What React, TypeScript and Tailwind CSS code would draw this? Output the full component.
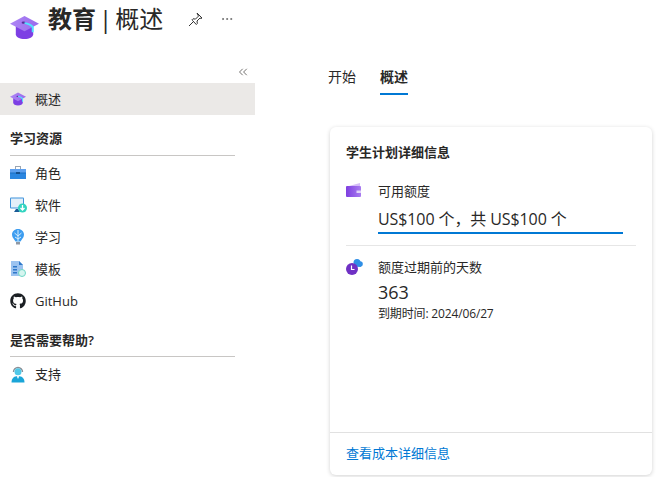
import { MoreHorizontal, ChevronsLeft } from "lucide-react"
import { FaGithub } from "react-icons/fa"
import type { ReactNode } from "react"

const CapIcon = ({ size, id }: { size: number; id: string }) => (
  <svg width={size} height={size} viewBox="0 0 30 30" className="shrink-0">
    <defs>
      <linearGradient id={id} x1="0" y1="0" x2="1" y2="0">
        <stop offset="0" stopColor="#ad85f5" />
        <stop offset="1" stopColor="#9a6cec" />
      </linearGradient>
    </defs>
    <path d="M6 13v9c0 3 4 5 9 5s9-2 9-5v-9z" fill="#7d3fe4" />
    <path d="M0 11 15 3l15 8-15 8z" fill={`url(#${id})`} />
    <ellipse cx="14" cy="10" rx="2" ry="1.200" fill="#552f99" />
    <path d="M15 9.500c4 .5 8 2 9.500 4.500v6h-2v-5c-1.500-2-4-3-7.500-4z" fill="#50e6ff" />
  </svg>
)

const RolesIcon = () => (
  <svg width="16" height="16" viewBox="0 0 16 16" className="shrink-0">
    <path d="M5 4V1h6v3h-1V2H6v2z" fill="#9aa5b1" />
    <rect x="0" y="4" width="16" height="4" fill="#5ea0ef" />
    <rect x="0" y="8" width="16" height="6" fill="#2b86e0" />
    <rect x="0" y="7.500" width="16" height="1" fill="#1b6ec2" />
    <rect x="6" y="7" width="4" height="2" fill="#15508f" />
  </svg>
)

const SoftwareIcon = () => (
  <svg width="17" height="16" viewBox="0 0 17 16" className="shrink-0">
    <rect x="0" y="0.500" width="14" height="11" rx="1" fill="#3f93dc" />
    <rect x="1" y="1.500" width="12" height="9" fill="#e3eff9" />
    <path d="M4 15l2-3h2l2 3z" fill="#1a5c96" />
    <circle cx="12.500" cy="11" r="4.500" fill="#32d4c0" />
    <path d="M12.500 8v5M10.500 11l2 2 2-2" stroke="#fff" strokeWidth="1.300" fill="none" />
  </svg>
)

const LearnIcon = () => (
  <svg width="16" height="16" viewBox="0 0 16 16" className="shrink-0">
    <path d="M8 0C4.500 0 2 2.500 2 5.500c0 2.500 1.500 4 2.500 5.500l1 1.500h5l1-1.500c1-1.500 2.500-3 2.500-5.500C14 2.500 11.500 0 8 0z" fill="#3d9df0" />
    <path d="M8 1v11M4.500 4l3.500 3 3.500-3M5 8l3 2 3-2" stroke="#d5ecfc" strokeWidth="1" fill="none" />
    <rect x="6" y="13" width="4" height="2.500" fill="#8f98a3" />
  </svg>
)

const TemplateIcon = () => (
  <svg width="16" height="16" viewBox="0 0 16 16" className="shrink-0">
    <path d="M1 0h8l4 4v11H1z" fill="#9cc3f0" />
    <path d="M9 0l4 4H9z" fill="#2f78c9" />
    <rect x="3" y="5" width="4" height="1.500" fill="#2f78c9" />
    <rect x="3" y="8" width="4" height="1.500" fill="#2f78c9" />
    <rect x="3" y="11" width="4" height="1.500" fill="#2f78c9" />
    <circle cx="12" cy="12" r="3.500" fill="#d5f5ef" stroke="#6fd6c6" strokeWidth="1" />
  </svg>
)

const SupportIcon = () => (
  <svg width="16" height="17" viewBox="0 0 16 17" className="shrink-0">
    <path d="M3.500 6a4.500 4.500 0 0 1 9 0" stroke="#8a8f96" strokeWidth="1.400" fill="none" />
    <circle cx="8" cy="5.800" r="3.500" fill="#50c8e8" />
    <path d="M1.500 16.500c0-4.500 3-6.500 6.500-6.500s6.500 2 6.500 6.500z" fill="#1aa5d8" />
    <path d="M6.500 10h3L8 13z" fill="#e8f7fc" />
  </svg>
)

const WalletIcon = () => (
  <svg width="16" height="15" viewBox="0 0 16 15" className="shrink-0">
    <defs>
      <linearGradient id="wallet" x1="0" y1="0" x2="1" y2="0">
        <stop offset="0" stopColor="#7e3fe0" />
        <stop offset="1" stopColor="#a97cf0" />
      </linearGradient>
    </defs>
    <path d="M3 3l11-3v3z" fill="#d5bdf8" />
    <rect x="0" y="3" width="15" height="11" rx="1" fill="url(#wallet)" />
    <rect x="10.500" y="7.500" width="4.500" height="2.500" fill="#e2d4fa" />
  </svg>
)

const ClockCloudIcon = () => (
  <svg width="17" height="16" viewBox="0 0 17 16" className="shrink-0">
    <circle cx="11" cy="3.500" r="3.500" fill="#2f8fe6" />
    <circle cx="14" cy="5" r="2.800" fill="#2f8fe6" />
    <rect x="8" y="4" width="7" height="3.800" fill="#2f8fe6" />
    <circle cx="6" cy="10" r="6" fill="#6f30c4" />
    <path d="M5.500 6.500V10.500h3" stroke="#fff" strokeWidth="1.200" fill="none" />
  </svg>
)

const PinIcon = () => (
  <svg width="15" height="15" viewBox="0 0 15 15" fill="none" stroke="#333" strokeWidth="1" className="shrink-0">
    <path d="M9 1l5 5-1 .5-1-.5-3 3 .3 2.500-1 1L4.500 8.500l-.5-.7 1-1 2.500.3 3-3-.5-1z" />
    <path d="M5.500 9.500 1 14" />
  </svg>
)

const NavRow = ({ icon, label, className = "" }: { icon: ReactNode; label: string; className?: string }) => (
  <div className={`flex h-8 items-center pl-[10px] pt-px text-[13px] text-[#292827] ${className}`}>
    <div className="-mt-px flex w-[25px] shrink-0 items-center">{icon}</div>
    <span>{label}</span>
  </div>
)

const SectionTitle = ({ label, className = "" }: { label: string; className?: string }) => (
  <div className={`ml-[10px] w-[225px] border-b border-[#c8c6c4] text-[13px] leading-[18px] font-semibold text-[#292827] ${className}`}>
    {label}
  </div>
)

export default function App() {
  return (
    <div
      className="flex h-[477px] w-[668px] flex-col overflow-hidden bg-white"
      style={{ fontFamily: '"Open Sans", "Noto Sans CJK SC", sans-serif' }}
    >
      <header className="flex h-[48px] shrink-0 items-start pl-[10px]">
        <div className="mt-[13px]">
          <CapIcon size={29} id="cap-lg" />
        </div>
        <h1 className="ml-[9px] mt-[1px] flex text-[24px] leading-[36px] text-[#292827]">
          <span className="font-semibold">教育</span>
          <span className="mx-[3px]">|</span>
          <span>概述</span>
        </h1>
        <div className="ml-[25px] mt-[12px]">
          <PinIcon />
        </div>
        <MoreHorizontal className="ml-[17px] mt-[12px] h-[14px] w-[14px] text-[#555]" strokeWidth={1.25} />
      </header>

      <div className="flex min-h-0 flex-1">
        <aside className="w-[255px] shrink-0">
          <div className="flex h-[35px] items-end justify-end pb-[4px] pr-[5px]">
            <ChevronsLeft className="h-[14px] w-[14px] text-[#605e5c]" strokeWidth={1.5} />
          </div>
          <NavRow icon={<CapIcon size={16} id="cap-sm" />} label="概述" className="bg-[#ebe9e7]" />
          <div className="mt-[14px]">
            <SectionTitle label="学习资源" className="pb-[8px]" />
          </div>
          <div className="mt-[1px]">
            <NavRow icon={<RolesIcon />} label="角色" />
            <NavRow icon={<SoftwareIcon />} label="软件" />
            <NavRow icon={<LearnIcon />} label="学习" />
            <NavRow icon={<TemplateIcon />} label="模板" />
            <NavRow icon={<FaGithub className="h-[16px] w-[16px] text-[#1b1f23]" />} label="GitHub" />
          </div>
          <div className="mt-[14px]">
            <SectionTitle label="是否需要帮助?" className="pb-[7px]" />
          </div>
          <div className="mt-[1px]">
            <NavRow icon={<SupportIcon />} label="支持" />
          </div>
        </aside>

        <main className="min-w-0 flex-1 pl-[73px]">
          <nav className="mt-[11px] flex gap-[24px] text-[14px] leading-[36px] text-[#292827]">
            <div className="h-[36px]">开始</div>
            <div className="h-[36px] border-b-2 border-[#0078d4] font-semibold">概述</div>
          </nav>
          <section className="ml-[2px] mt-[32px] flex h-[348px] w-[322px] flex-col rounded-[6px] bg-white shadow-[0_1px_4px_rgba(0,0,0,0.18)]">
            <div className="flex-1 px-[16px] pt-[16px]">
              <h2 className="text-[13px] leading-[18px] font-semibold text-[#292827]">学生计划详细信息</h2>
              <div className="mt-[21px] flex border-b border-[#e6e6e6] pb-[11px]">
                <div className="w-[32px] shrink-0 pt-px">
                  <WalletIcon />
                </div>
                <div className="min-w-0 flex-1 pr-[13px]">
                  <div className="text-[13px] leading-[18px] text-[#292827]">可用额度</div>
                  <div className="mt-[6px] border-b-2 border-[#0078d4] text-[16px] leading-[26px] tracking-[-0.1px] text-[#292827]">
                    US$100 个，共 US$100 个
                  </div>
                </div>
              </div>
              <div className="mt-[12px] flex">
                <div className="w-[32px] shrink-0 pt-px">
                  <ClockCloudIcon />
                </div>
                <div>
                  <div className="text-[13px] leading-[18px] text-[#292827]">额度过期前的天数</div>
                  <div className="mt-[4px] text-[18px] leading-[24px] text-[#292827]">363</div>
                  <div className="mt-[2px] text-[12px] leading-[16px] tracking-[-0.15px] text-[#292827]">到期时间: 2024/06/27</div>
                </div>
              </div>
            </div>
            <div className="flex h-[43px] items-center border-t border-[#e1e1e1] px-[16px] text-[13px] text-[#0078d4]">
              查看成本详细信息
            </div>
          </section>
        </main>
      </div>
    </div>
  )
}
